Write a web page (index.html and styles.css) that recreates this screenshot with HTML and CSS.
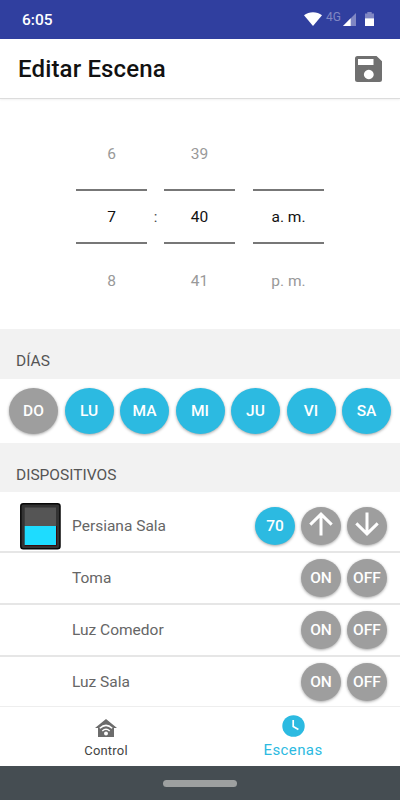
FILE: index.html
```html
<!DOCTYPE html>
<html lang="es">
<head>
  <meta charset="UTF-8" />
  <title>Editar Escena</title>
  <link rel="stylesheet" href="styles.css">
</head>
<body>
  <div class="status">
    <span class="clock">6:05</span>
    <svg class="wifi" width="18" height="14" viewBox="0 0 18 14"><path d="M0 3.2C5 -.9 13 -.9 18 3.2L9 14z" fill="#fff"/></svg>
    <span class="net">4G</span>
    <svg class="signal" width="13" height="13" viewBox="0 0 13 13"><path d="M0 13L13 0V13z" fill="#8087c3"/><path d="M0 13L7.7 5.3V13z" fill="#fff"/></svg>
    <svg class="battery" width="9" height="14" viewBox="0 0 9 14"><path d="M0 1.5H2.3V0H6.7V1.5H9V6.5H0z" fill="#8087c3"/><path d="M0 6.3H9V14H0z" fill="#fff"/></svg>
  </div>

  <header class="header">
    <h1>Editar Escena</h1>
    <svg width="27" height="26" viewBox="0 0 27 26"><path fill="#707070" fill-rule="evenodd" d="M2.5 0H21.5L27 5.3V23.5A2.5 2.5 0 0 1 24.5 26H2.5A2.5 2.5 0 0 1 0 23.5V2.5A2.5 2.5 0 0 1 2.5 0zM3 3V9H18.5V3zM13.8 13.8a4.9 4.7 0 1 0 .01 0z"/></svg>
  </header>

  <div class="picker">
    <div class="wheel"><span>6</span><b>7</b><span>8</span></div>
    <div class="colon">:</div>
    <div class="wheel"><span>39</span><b>40</b><span>41</span></div>
    <div class="wheel ampm"><span></span><b>a. m.</b><span>p. m.</span></div>
  </div>

  <h2 class="section">DÍAS</h2>
  <div class="days">
    <button class="day off">DO</button>
    <button class="day">LU</button>
    <button class="day">MA</button>
    <button class="day">MI</button>
    <button class="day">JU</button>
    <button class="day">VI</button>
    <button class="day">SA</button>
  </div>

  <h2 class="section devices">DISPOSITIVOS</h2>
  <ul class="list">
    <li class="first">
      <svg class="blind" width="41" height="47" viewBox="0 0 41 47"><rect x=".8" y=".8" width="39.2" height="45" rx="2.5" fill="#333" stroke="#080808" stroke-width="1.5"/><path d="M4.7 4.5H36V23H4.7z" fill="#555"/><path d="M4.7 23H36V42H4.7z" fill="#1edcff"/><path d="M4.7 42.6H36.5V23" fill="none" stroke="#3b0a0a"/></svg>
      <span class="name">Persiana Sala</span>
      <button class="on">70</button>
      <button><svg width="24" height="24" viewBox="0 0 24 24"><path d="M12 23.5V2M1.3 12.6L12 2.2L22.7 12.6"/></svg></button>
      <button><svg width="24" height="24" viewBox="0 0 24 24"><path d="M12 .5V22M1.3 11.4L12 21.8L22.7 11.4"/></svg></button>
    </li>
    <li><span class="name">Toma</span><button>ON</button><button>OFF</button></li>
    <li><span class="name">Luz Comedor</span><button>ON</button><button>OFF</button></li>
    <li><span class="name">Luz Sala</span><button>ON</button><button>OFF</button></li>
  </ul>

  <nav class="tabs">
    <a class="tab">
      <svg width="22" height="18" viewBox="0 0 22 18"><path d="M11 0L22 9H19V18H3V9H0z" fill="#6c6c6c"/><g fill="none" stroke="#fff" stroke-width="1.5"><path d="M4.8 9.2Q11 3.6 17.2 9.2M7.3 12Q11 8.6 14.7 12"/></g><circle cx="11" cy="14.5" r="2" fill="#fff"/></svg>
      <span>Control</span>
    </a>
    <a class="tab active">
      <svg width="23" height="22" viewBox="0 0 23 22"><ellipse cx="11.5" cy="11" rx="11.2" ry="10.8" fill="#2cbae1"/><path d="M11.2 5V11.5L16.4 14.5" fill="none" stroke="#fff" stroke-width="1.7"/></svg>
      <span>Escenas</span>
    </a>
  </nav>
  <div class="navbar"><div class="pill"></div></div>
</body>
</html>
```

FILE: styles.css
```css
* { box-sizing: border-box; }
body { margin: 0; width: 400px; height: 800px; overflow: hidden; background: #fff; font-family: Roboto, sans-serif; }
h1, h2, ul { margin: 0; padding: 0; }
button { border: 0; padding: 0; font-family: inherit; color: #fff; background: #9e9e9e; box-shadow: 0 1px 3px rgba(0,0,0,.35); }

.status { display: flex; height: 39px; background: #303f9f; color: #fff; padding: 0 26px 0 22px; }
.clock { flex: 1; font-size: 15.5px; font-weight: 500; line-height: 40px; }
.wifi { margin-top: 12px; }
.net { margin: 9px 2px 0 4px; font-size: 12px; line-height: 16px; font-weight: 400; color: #8087c3; }
.signal { margin-top: 13px; }
.battery { margin: 12px 0 0 9px; }

.header { display: flex; justify-content: space-between; align-items: center; height: 60px; padding: 0 18px; border-bottom: 1px solid #dcdcdc; box-shadow: 0 1px 2px rgba(0,0,0,.06); }
.header h1 { font-size: 24px; letter-spacing: .15px; font-weight: 500; color: #111; line-height: 60px; padding-top: 1px; }

.picker { display: flex; height: 230px; padding: 23px 76px 0; }
.wheel { width: 71px; text-align: center; font-size: 15.5px; color: #999; }
.wheel span { display: block; height: 67px; line-height: 64px; }
.wheel b { display: block; height: 55px; line-height: 52px; border-top: 2px solid #777; border-bottom: 2px solid #777; font-weight: 400; color: #111; }
.wheel b + span { line-height: 74px; }
.colon { width: 17px; margin-top: 67px; line-height: 56px; text-align: center; font-size: 15px; color: #444; }
.ampm { margin-left: 18px; }

.section { height: 50px; padding: 7px 16px 0; background: #f2f2f2; font-size: 15.5px; font-weight: 400; line-height: 50px; color: #555; }
.days { display: flex; justify-content: space-between; height: 64px; padding: 9px 9px 0; }
.day { width: 49px; height: 46px; border-radius: 50%; background: #2cbae1; font-size: 15.5px; font-weight: 500; }
.off { background: #9e9e9e; }
.devices { height: 49px; }

.list { list-style: none; }
.list li { display: flex; align-items: center; gap: 6px; height: 52px; padding: 0 13px 0 72px; border-bottom: 2px solid #e6e6e6; }
.list .first { height: 61px; padding: 9px 13px 0 20px; }
.list li:last-child { height: 49px; border-bottom: 0; }
.blind { margin-right: 5px; }
.name { flex: 1; font-size: 15.5px; color: #666; }
.list button { width: 40px; height: 38px; border-radius: 50%; font-size: 15.5px; font-weight: 500; }
.list .on { background: #2cbae1; }
.list button svg { display: block; margin: -4px auto 0; fill: none; stroke: #fff; stroke-width: 3; }

.tabs { display: flex; height: 60px; border-top: 1px solid #eee; }
.tab { display: flex; flex-direction: column; align-items: center; width: 187px; padding: 12px 0 0 25px; font-size: 13px; letter-spacing: .2px; color: #444; }
.tab span { margin-top: 6px; line-height: 16px; }
.active { padding-top: 8px; font-size: 15px; letter-spacing: .4px; color: #2cbae1; }
.active span { margin-top: 5px; }
.navbar { display: flex; justify-content: center; height: 34px; padding-top: 14px; background: #454d52; }
.pill { width: 74px; height: 7px; border-radius: 4px; background: #9da0a0; }
```
